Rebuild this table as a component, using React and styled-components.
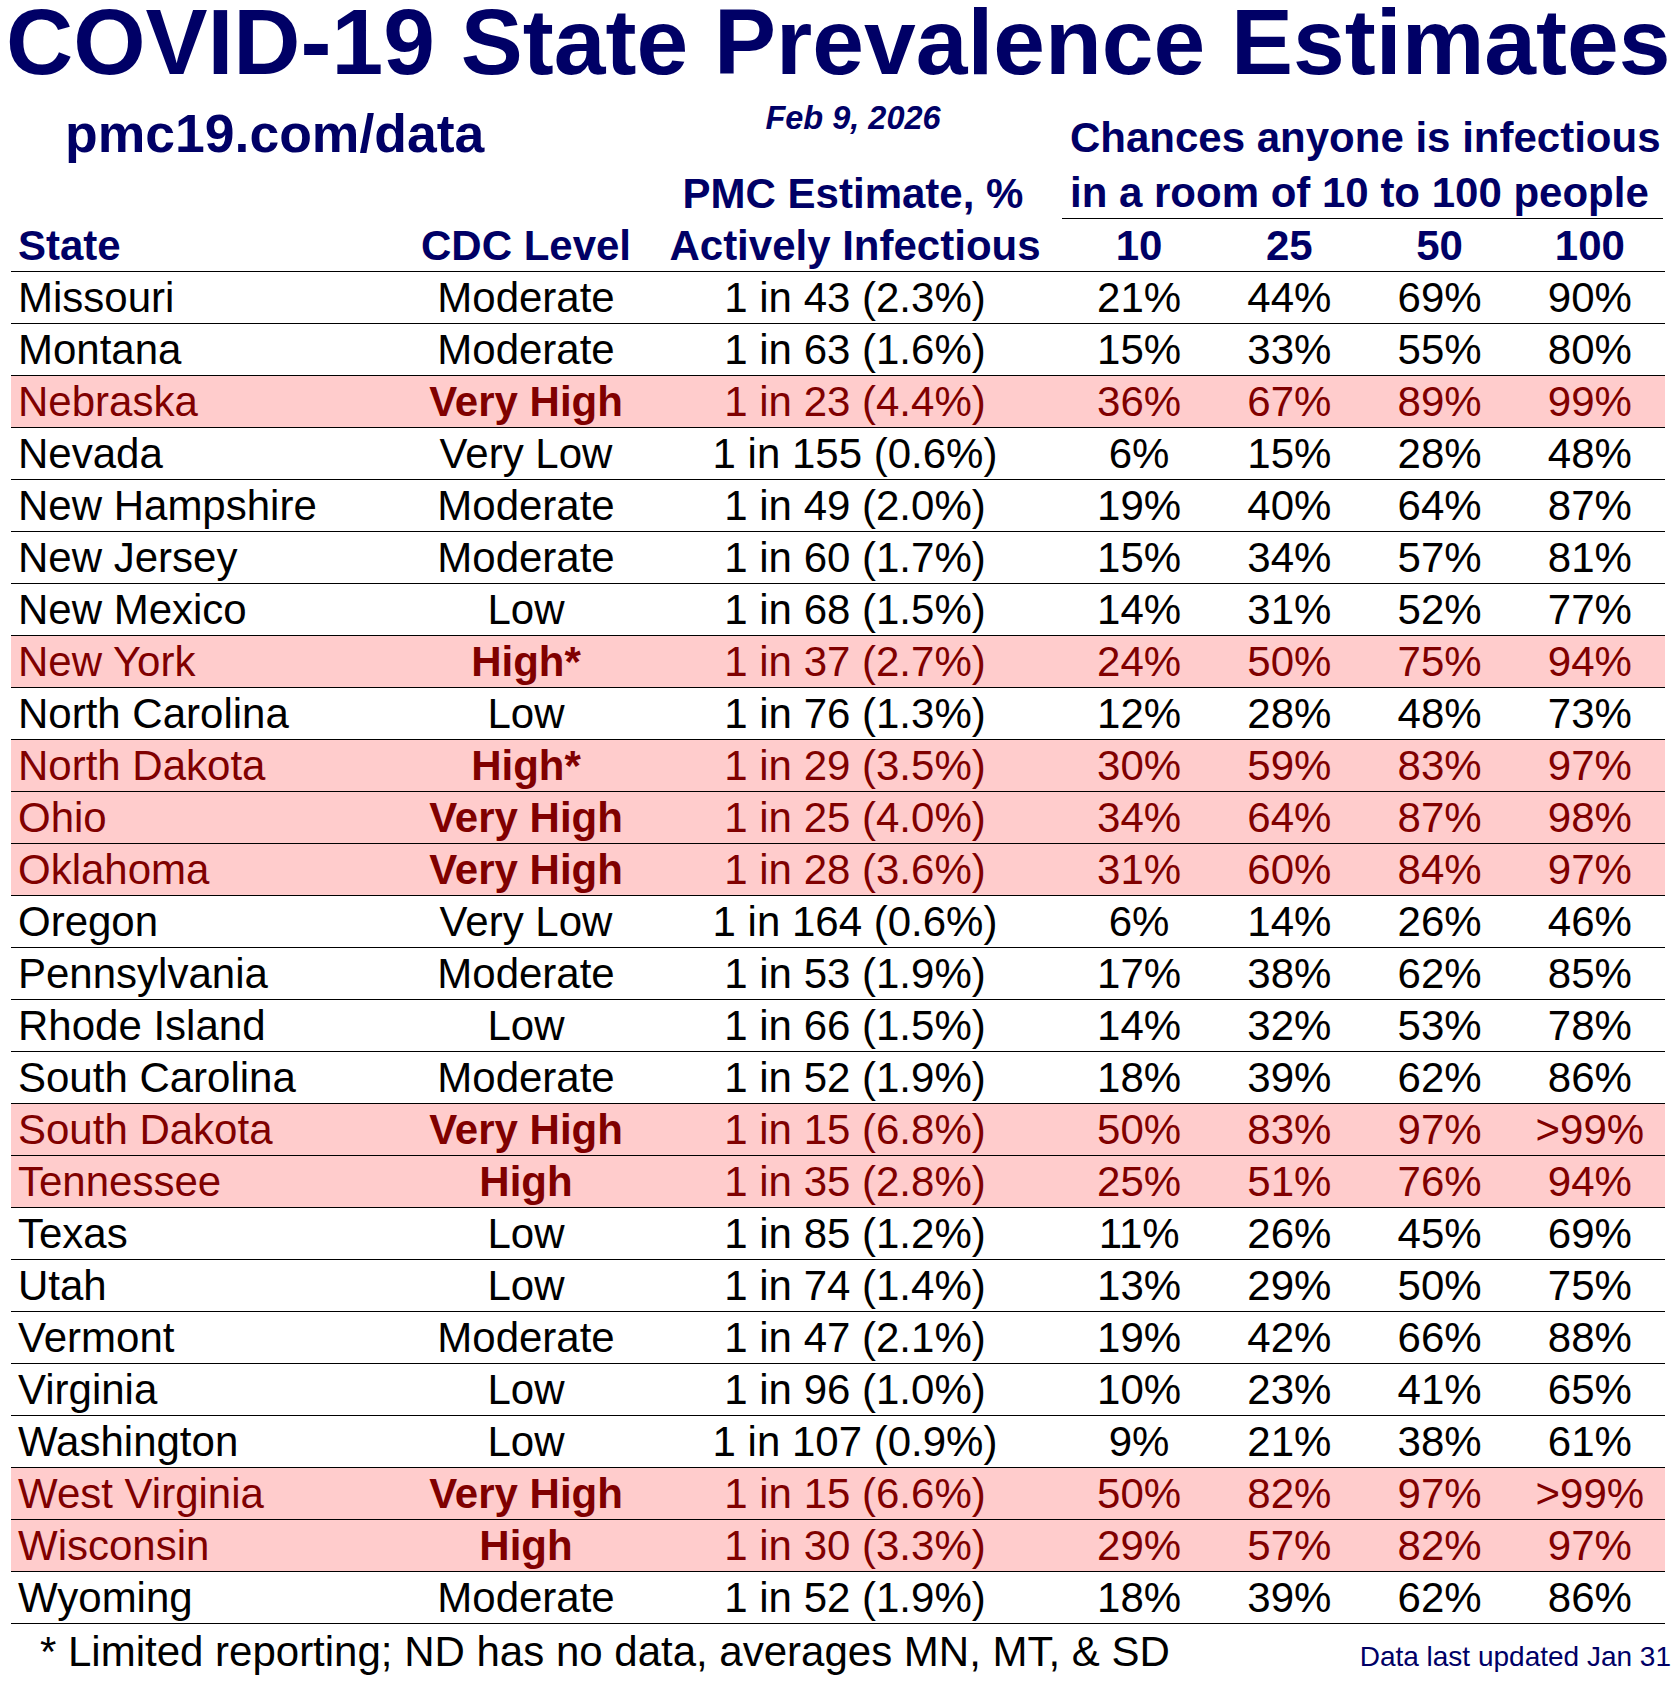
import styled, { createGlobalStyle } from 'styled-components';

const rows = [
  ['Missouri', 'Moderate', '1 in 43 (2.3%)', ['21%', '44%', '69%', '90%']],
  ['Montana', 'Moderate', '1 in 63 (1.6%)', ['15%', '33%', '55%', '80%']],
  ['Nebraska', 'Very High', '1 in 23 (4.4%)', ['36%', '67%', '89%', '99%'], true],
  ['Nevada', 'Very Low', '1 in 155 (0.6%)', ['6%', '15%', '28%', '48%']],
  ['New Hampshire', 'Moderate', '1 in 49 (2.0%)', ['19%', '40%', '64%', '87%']],
  ['New Jersey', 'Moderate', '1 in 60 (1.7%)', ['15%', '34%', '57%', '81%']],
  ['New Mexico', 'Low', '1 in 68 (1.5%)', ['14%', '31%', '52%', '77%']],
  ['New York', 'High*', '1 in 37 (2.7%)', ['24%', '50%', '75%', '94%'], true],
  ['North Carolina', 'Low', '1 in 76 (1.3%)', ['12%', '28%', '48%', '73%']],
  ['North Dakota', 'High*', '1 in 29 (3.5%)', ['30%', '59%', '83%', '97%'], true],
  ['Ohio', 'Very High', '1 in 25 (4.0%)', ['34%', '64%', '87%', '98%'], true],
  ['Oklahoma', 'Very High', '1 in 28 (3.6%)', ['31%', '60%', '84%', '97%'], true],
  ['Oregon', 'Very Low', '1 in 164 (0.6%)', ['6%', '14%', '26%', '46%']],
  ['Pennsylvania', 'Moderate', '1 in 53 (1.9%)', ['17%', '38%', '62%', '85%']],
  ['Rhode Island', 'Low', '1 in 66 (1.5%)', ['14%', '32%', '53%', '78%']],
  ['South Carolina', 'Moderate', '1 in 52 (1.9%)', ['18%', '39%', '62%', '86%']],
  ['South Dakota', 'Very High', '1 in 15 (6.8%)', ['50%', '83%', '97%', '>99%'], true],
  ['Tennessee', 'High', '1 in 35 (2.8%)', ['25%', '51%', '76%', '94%'], true],
  ['Texas', 'Low', '1 in 85 (1.2%)', ['11%', '26%', '45%', '69%']],
  ['Utah', 'Low', '1 in 74 (1.4%)', ['13%', '29%', '50%', '75%']],
  ['Vermont', 'Moderate', '1 in 47 (2.1%)', ['19%', '42%', '66%', '88%']],
  ['Virginia', 'Low', '1 in 96 (1.0%)', ['10%', '23%', '41%', '65%']],
  ['Washington', 'Low', '1 in 107 (0.9%)', ['9%', '21%', '38%', '61%']],
  ['West Virginia', 'Very High', '1 in 15 (6.6%)', ['50%', '82%', '97%', '>99%'], true],
  ['Wisconsin', 'High', '1 in 30 (3.3%)', ['29%', '57%', '82%', '97%'], true],
  ['Wyoming', 'Moderate', '1 in 52 (1.9%)', ['18%', '39%', '62%', '86%']],
];

export default function App() {
  return (
    <Page>
      <GlobalStyle />
      <Title>COVID-19 State Prevalence Estimates</Title>
      <SubHeader>
        <SiteLink>pmc19.com/data</SiteLink>
        <EstimateBlock>
          <DateLine>Feb 9, 2026</DateLine>
          <HeadText $lh={50}>PMC Estimate, %</HeadText>
        </EstimateBlock>
        <ChancesBlock>
          <HeadText $lh={55}>Chances anyone is infectious</HeadText>
          <HeadText $lh={55}>in a room of 10 to 100 people</HeadText>
        </ChancesBlock>
      </SubHeader>
      <HeaderRow>
        <StateCell>State</StateCell>
        <Cell>CDC Level</Cell>
        <Cell>Actively Infectious</Cell>
        <Cell>10</Cell>
        <Cell>25</Cell>
        <Cell>50</Cell>
        <Cell>100</Cell>
      </HeaderRow>
      {rows.map(([state, level, est, chances, hot]) => (
        <Row key={state} $hot={hot}>
          <StateCell>{state}</StateCell>
          <LevelCell $hot={hot}>{level}</LevelCell>
          <Cell>{est}</Cell>
          {chances.map((c, i) => <Cell key={i}>{c}</Cell>)}
        </Row>
      ))}
      <Footer>
        <Note>* Limited reporting; ND has no data, averages MN, MT, &amp; SD</Note>
        <Updated>Data last updated Jan 31</Updated>
      </Footer>
    </Page>
  );
}

const GlobalStyle = createGlobalStyle`
  body {
    margin: 0;
    background: #ffffff;
    font-family: "Liberation Sans", Arial, sans-serif;
  }
`;

const Page = styled.div`
  width: 1676px;
  color: #000000;
`;

const Title = styled.h1`
  margin: 0;
  padding-left: 6px;
  font-size: 93px;
  line-height: 84px;
  font-weight: 700;
  color: #000066;
  white-space: nowrap;
`;

const SubHeader = styled.div`
  display: flex;
  margin-left: 11px;
  height: 135px;
  color: #000066;
  font-weight: 700;
`;

const SiteLink = styled.div`
  width: 579px;
  padding: 20px 0 0 54px;
  font-size: 53.5px;
  line-height: 60px;
`;

const EstimateBlock = styled.div`
  width: 418px;
  display: flex;
  flex-direction: column;
  align-items: center;
  justify-content: space-between;
  padding-top: 16px;
`;

const DateLine = styled.div`
  font-size: 32.5px;
  line-height: 36px;
  font-style: italic;
`;

const HeadText = styled.div`
  font-size: 42px;
  line-height: ${(p) => p.$lh}px;
  white-space: nowrap;
`;

const ChancesBlock = styled.div`
  width: 601px;
  height: 109px;
  align-self: flex-end;
  padding-left: 8px;
  box-sizing: border-box;
  border-bottom: 1px solid #000000;
`;

const Grid = styled.div`
  display: grid;
  grid-template-columns: 395px 240px 418px repeat(4, 1fr);
  width: 1654px;
  margin-left: 11px;
  padding-top: 1px;
  border-bottom: 1px solid #000000;
  font-size: 42px;
  line-height: 50px;
  white-space: nowrap;
`;

const HeaderRow = styled(Grid)`
  color: #000066;
  font-weight: 700;
  padding-top: 2px;
`;

const Row = styled(Grid)`
  background: ${(p) => (p.$hot ? '#ffcccc' : 'transparent')};
  color: ${(p) => (p.$hot ? '#800000' : '#000000')};
`;

const Cell = styled.div`
  text-align: center;
`;

const StateCell = styled.div`
  padding-left: 7px;
`;

const LevelCell = styled(Cell)`
  font-weight: ${(p) => (p.$hot ? 700 : 400)};
`;

const Footer = styled.div`
  display: flex;
  justify-content: space-between;
  align-items: baseline;
  padding: 2px 5px 0 40px;
`;

const Note = styled.div`
  font-size: 42px;
  line-height: 52px;
`;

const Updated = styled.div`
  font-size: 28px;
  color: #000066;
`;
